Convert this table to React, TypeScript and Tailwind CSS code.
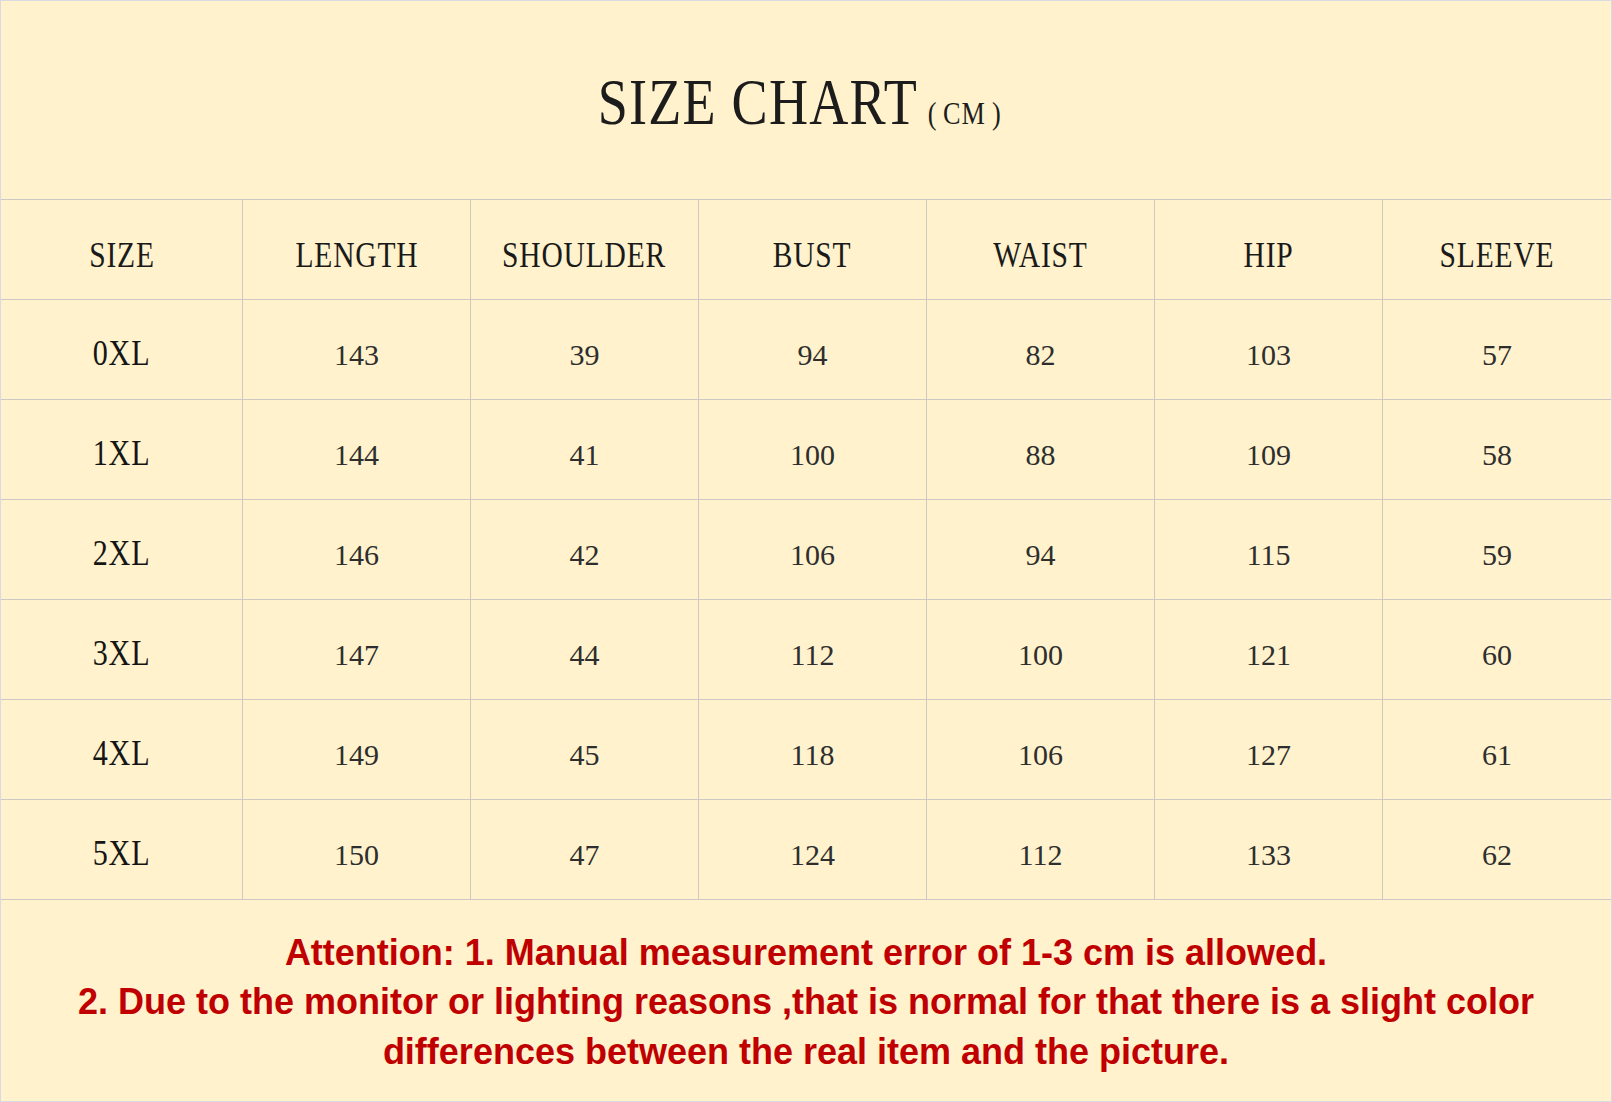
const headers = ["SIZE", "LENGTH", "SHOULDER", "BUST", "WAIST", "HIP", "SLEEVE"];

const rows = [
  ["0XL", "143", "39", "94", "82", "103", "57"],
  ["1XL", "144", "41", "100", "88", "109", "58"],
  ["2XL", "146", "42", "106", "94", "115", "59"],
  ["3XL", "147", "44", "112", "100", "121", "60"],
  ["4XL", "149", "45", "118", "106", "127", "61"],
  ["5XL", "150", "47", "124", "112", "133", "62"],
];

const serif = "font-['Liberation_Serif','Times_New_Roman',serif]";

export default function App() {
  return (
    <div className="w-[1612px] h-[1102px] bg-[#fff2cc] border border-[#d9d9e1] flex flex-col">
      {/* title */}
      <div className="h-[199px] border-b border-[#cdc8c4] flex items-center justify-center pt-[4px]">
        <div className={`flex items-baseline scale-x-[0.82] text-[#1c1c1c] ${serif} pr-[16px]`}>
          <span className="text-[66px] leading-none tracking-[1.5px]">SIZE CHART</span>
          <span className="text-[32px] leading-none ml-[12px]">
            (<span className="mx-[8px] tracking-[1px]">CM</span>)
          </span>
        </div>
      </div>

      {/* table */}
      <div className="grid grid-cols-[242px_repeat(6,1fr)]">
        {headers.map((h, i) => (
          <Cell key={h} last={i === headers.length - 1}>
            <span className="inline-block scale-x-[0.82] tracking-[1px] text-[36px] text-[#1a1a1a]">{h}</span>
          </Cell>
        ))}
        {rows.map((r) =>
          r.map((v, i) => (
            <Cell key={r[0] + i} last={i === r.length - 1}>
              {i === 0 ? (
                <span className="inline-block scale-x-[0.86] tracking-[1px] text-[35px] text-[#151515]">{v}</span>
              ) : (
                <span className="text-[30px] text-[#2e2e2e]">{v}</span>
              )}
            </Cell>
          ))
        )}
      </div>

      {/* note */}
      <div className="flex-1 flex items-center justify-center pt-[3px]">
        <p className="text-center font-['Liberation_Sans',Arial,sans-serif] font-bold text-[36px] leading-[49.5px] text-[#c00000]">
          Attention: 1. Manual measurement error of 1-3 cm is allowed.
          <br />
          2. Due to the monitor or lighting reasons ,that is normal for that there is a slight color
          <br />
          differences between the real item and the picture.
        </p>
      </div>
    </div>
  );
}

function Cell({ children, last }: { children: React.ReactNode; last?: boolean }) {
  return (
    <div
      className={`h-[100px] border-b border-[#cdc8c4] flex items-center justify-center pt-[10px] ${serif} ${
        last ? "" : "border-r"
      }`}
    >
      {children}
    </div>
  );
}
